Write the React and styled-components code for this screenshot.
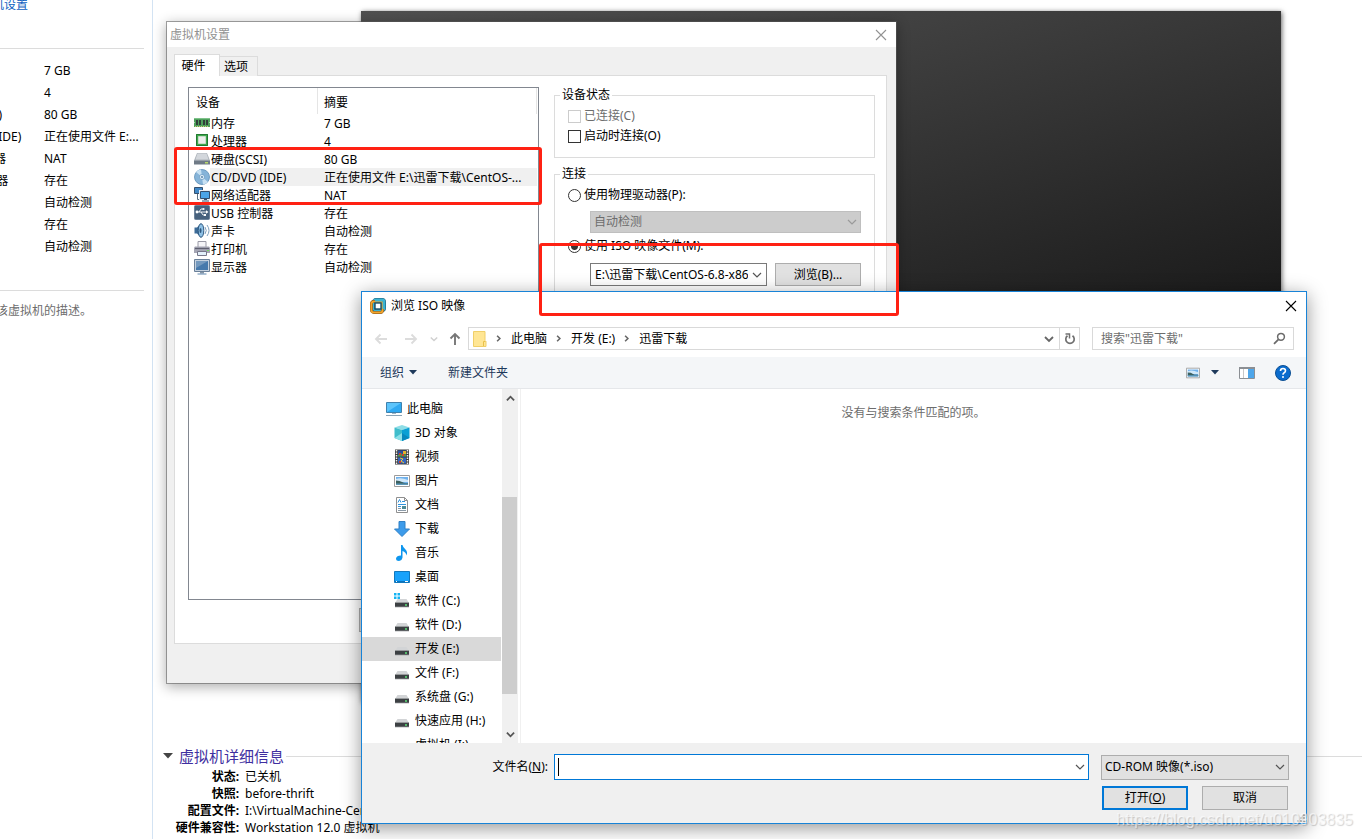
import { styled, createGlobalStyle } from "styled-components";

const GlobalStyle = createGlobalStyle`
  * {
    box-sizing: border-box;
  }

  body {
    margin: 0;
    overflow: hidden;
    background-color: #fff;
    color: #000;
    font-family: "Noto Sans", "Noto Sans CJK SC", sans-serif;
    font-size: 12px;
    line-height: 16px;
  }

  button, input, select {
    margin: 0;
    padding: 0;
    font: inherit;
    color: inherit;
  }

  svg {
    display: block;
    flex: none;
  }
`;

/* ---------- workstation page ---------- */

const Desktop = styled.div`
  position: relative;
  display: flex;
  height: 100vh;
  min-height: 839px;
  overflow: hidden;
`;

const Sidebar = styled.aside`
  width: 153px;
  flex: none;
  padding-right: 8px;
  overflow: hidden;
  border-right: 1px solid #d3e3f3;
  white-space: nowrap;
`;

const SidebarHead = styled.div`
  display: flex;
  justify-content: flex-end;
  width: 28px;
  height: 48px;

  a {
    height: 16px;
    margin-top: -3px;
    color: #0c5fbf;
    text-decoration: none;
  }
`;

const SpecList = styled.dl`
  display: grid;
  grid-template-columns: 98px 1fr;
  grid-auto-rows: 22px;
  align-items: center;
  margin: 0 0 0 -54px;
  padding: 11px 0 32px;

  dt, dd {
    margin: 0;
  }
`;

const Rule = styled.hr`
  flex: 1;
  height: 1px;
  margin: 0;
  border: 0;
  background-color: #dcdcdc;
`;

const Describe = styled.p`
  display: flex;
  justify-content: flex-end;
  width: 92px;
  margin: 12px 0 0;
  color: #6d6d6d;
`;

const Main = styled.main`
  flex: 1;
  display: flex;
  flex-direction: column;
  min-width: 0;
`;

const Screen = styled.div`
  height: 691px;
  margin: 11px 81px 0 208px;
  background: linear-gradient(163deg, #505050 0%, #404040 19%, #1b1b1b 58%, #111 100%);
  box-shadow: 1px 1px 5px rgba(0, 0, 0, 0.6);
`;

const Details = styled.section`
  margin-top: 44px;
  padding-left: 10px;
`;

const DetailsHead = styled.div`
  display: flex;
  align-items: center;
  height: 20px;
  gap: 2px;

  h2 {
    margin: 0 0 0 4px;
    color: #3f2fa0;
    font-size: 15px;
    font-weight: 400;
    line-height: 20px;
  }
`;

const DetailsList = styled.dl`
  display: grid;
  grid-template-columns: 76px 1fr;
  grid-auto-rows: 17px;
  column-gap: 6px;
  margin: 2px 0 0;
  line-height: 17px;

  dt {
    text-align: right;
    font-weight: 700;
    white-space: nowrap;
  }
  dd {
    margin: 0;
  }
`;

/* ---------- shared controls ---------- */

const WinButton = styled.button`
  width: ${({ $width }) => $width || 86}px;
  height: ${({ $height }) => $height || 24}px;
  border: ${({ $primary }) => ($primary ? "2px solid #0078d7" : "1px solid #adadad")};
  background-color: #e1e1e1;
`;

const PlainButton = styled.button`
  display: flex;
  align-items: center;
  justify-content: center;
  gap: ${({ $gap }) => $gap || 5}px;
  width: ${({ $width }) => ($width ? `${$width}px` : "auto")};
  height: ${({ $height }) => ($height ? `${$height}px` : "auto")};
  border: 0;
  background: none;
`;

const Combo = styled.div`
  display: flex;
  align-items: center;
  width: ${({ $width }) => ($width ? `${$width}px` : "auto")};
  flex: ${({ $grow }) => ($grow ? 1 : "none")};
  height: ${({ $height }) => $height}px;
  padding: 0 ${({ $end }) => $end || 0}px 0 ${({ $indent }) => $indent || 4}px;
  border: 1px solid ${({ $border }) => $border || "#7a7a7a"};
  background-color: #fff;

  input {
    flex: 1;
    min-width: 0;
    border: 0;
    outline: 0;
    background: none;
  }
`;

const Caret = styled.span`
  width: 1px;
  height: 18px;
  background-color: #000;
`;

const SelectWrap = styled.div`
  display: grid;
  align-items: center;
  width: ${({ $width }) => $width}px;

  select, svg {
    grid-area: 1 / 1;
  }
  select {
    appearance: none;
    width: 100%;
    height: ${({ $height }) => $height}px;
    padding: 0 20px 0 3px;
    border: 1px solid ${({ $disabled }) => ($disabled ? "#bfbfbf" : "#adadad")};
    border-radius: 0;
    background-color: ${({ $disabled }) => ($disabled ? "#ccc" : "#e1e1e1")};
    color: ${({ $disabled }) => ($disabled ? "#6d6d6d" : "#000")};
    opacity: 1;
  }
  svg {
    justify-self: end;
    margin-right: 4px;
    pointer-events: none;
  }
`;

/* ---------- settings window ---------- */

const SettingsWindow = styled.section`
  position: absolute;
  top: 21px;
  left: 166px;
  width: 731px;
  border: 1px solid rgba(90, 90, 90, 0.55);
  background-color: #f0f0f0;
  background-clip: padding-box;
  box-shadow: 0 3px 12px rgba(0, 0, 0, 0.32);
`;

const SettingsTitle = styled.header`
  display: flex;
  align-items: center;
  justify-content: space-between;
  height: 25px;
  padding: 0 9px 0 3px;
  background-color: #fff;
  color: #929292;
`;

const SettingsBody = styled.div`
  padding: 7px 9px 39px 7px;
`;

const Tabs = styled.div`
  display: flex;
  align-items: flex-end;
  height: 22px;
`;

const Tab = styled.button`
  position: relative;
  z-index: ${({ $active }) => ($active ? 1 : 0)};
  width: ${({ $active }) => ($active ? 46 : 38)}px;
  height: ${({ $active }) => ($active ? 22 : 20)}px;
  padding-right: ${({ $active }) => ($active ? 7 : 5)}px;
  border: 1px solid #dcdcdc;
  border-bottom: 0;
  border-left-width: ${({ $active }) => ($active ? 1 : 0)}px;
  background-color: ${({ $active }) => ($active ? "#fff" : "#f0f0f0")};
`;

const TabPanel = styled.div`
  display: flex;
  gap: 15px;
  margin-top: -1px;
  padding: 11px 11px 11px 13px;
  border: 1px solid #dcdcdc;
  background-color: #fff;
`;

const DeviceColumn = styled.div`
  width: 351px;
`;

const DeviceFrame = styled.div`
  height: 513px;
  border: 1px solid #828790;
`;

const DeviceTable = styled.table`
  width: 348px;
  table-layout: fixed;
  border-collapse: separate;
  border-spacing: 0;

  th {
    height: 26px;
    padding: 3px 0 0 7px;
    border-right: 1px solid #e5e5e5;
    font-weight: 400;
    text-align: left;
  }
  th + th {
    padding-left: 6px;
  }
  th:first-child {
    width: 129px;
  }
  td {
    height: 18px;
    padding: 0;
    white-space: nowrap;
  }
`;

const DeviceName = styled.div`
  display: flex;
  align-items: center;
  height: 18px;
  padding-left: 5px;

  span {
    flex: 1;
    height: 18px;
    padding-left: 1px;
    line-height: 19px;
    background-color: ${({ $selected }) => ($selected ? "#f0f0f0" : "transparent")};
  }
`;

const DeviceSummary = styled.div`
  height: 18px;
  padding-left: 6px;
  line-height: 19px;
  overflow: hidden;
  text-overflow: ellipsis;
  background-color: ${({ $selected }) => ($selected ? "#f0f0f0" : "transparent")};
`;

const DeviceActions = styled.div`
  display: flex;
  justify-content: flex-end;
  gap: 8px;
  margin-top: 8px;
`;

const OptionColumn = styled.div`
  flex: 1;
  display: flex;
  flex-direction: column;
  gap: 8px;
`;

const Group = styled.fieldset`
  min-width: 0;
  margin: 0;
  padding: 3px 13px 11px;
  border: 1px solid #dcdcdc;

  legend {
    margin-left: -8px;
    padding: 0 2px;
  }
`;

const OptionLabel = styled.label`
  display: flex;
  align-items: center;
  gap: 3px;
  height: 20px;
  color: ${({ $disabled }) => ($disabled ? "#6d6d6d" : "#000")};

  input {
    appearance: none;
    width: 13px;
    height: 13px;
    border: 1px solid ${({ $disabled }) => ($disabled ? "#ccc" : "#333")};
    background-color: #fff;
  }
  input[type="radio"] {
    border-radius: 50%;
  }
  input[type="radio"]:checked {
    background: radial-gradient(circle, #333 3px, #fff 4px);
  }
`;

const Indented = styled.div`
  display: flex;
  gap: 8px;
  padding: ${({ $top }) => $top}px 0 3px 22px;
`;

/* ---------- file dialog ---------- */

const Dialog = styled.section`
  position: absolute;
  top: 291px;
  left: 361px;
  width: 946px;
  border: 1px solid #1883d7;
  background-color: #fff;
  box-shadow: 0 4px 18px rgba(0, 0, 0, 0.42);
`;

const DialogTitle = styled.header`
  display: flex;
  align-items: center;
  gap: 5px;
  height: 28px;
  padding: 0 9px 0 8px;

  h1 {
    flex: 1;
    margin: 0;
    font-size: 12px;
    font-weight: 400;
    line-height: 18px;
  }
`;

const NavBar = styled.nav`
  display: flex;
  align-items: center;
  height: 37px;
  padding: 0 12px 0 4px;
`;

const AddressBar = styled.div`
  flex: 1;
  display: flex;
  align-items: center;
  height: 23px;
  padding-left: 4px;
  border: 1px solid #d9d9d9;
`;

const Crumb = styled.a`
  display: flex;
  align-items: center;
  color: #000;
  text-decoration: none;

  svg {
    margin: 0 9px 0 8px;
  }
`;

const AddressTools = styled.div`
  display: flex;
  height: 21px;
  margin-left: auto;

  button + button {
    border-left: 1px solid #d9d9d9;
  }
`;

const SearchBox = styled.label`
  display: flex;
  align-items: center;
  width: 202px;
  height: 23px;
  margin-left: 12px;
  padding: 0 7px 0 8px;
  border: 1px solid #d9d9d9;

  input {
    flex: 1;
    min-width: 0;
    border: 0;
    outline: 0;
  }
  input::placeholder {
    color: #6d6d6d;
    opacity: 1;
  }
`;

const Toolbar = styled.div`
  display: flex;
  align-items: center;
  height: 32px;
  padding: 0 15px 0 18px;
  border-bottom: 1px solid #e5e7ea;
  background-color: #f4f6f8;
  color: #1e395b;
`;

const ToolGroup = styled.div`
  display: flex;
  align-items: center;
  gap: ${({ $gap }) => $gap}px;
  margin-left: ${({ $end }) => ($end ? "auto" : 0)};
`;

const Browser = styled.div`
  display: flex;
  height: 354px;
`;

const Tree = styled.ul`
  width: 140px;
  margin: 0;
  padding: 8px 1px 0 0;
  overflow: hidden;
  list-style: none;
`;

const TreeItem = styled.li`
  display: flex;
  align-items: center;
  gap: 5px;
  height: 24px;
  padding-left: ${({ $root }) => ($root ? 24 : 32)}px;
  background-color: ${({ $selected }) => ($selected ? "#d9d9d9" : "transparent")};
  white-space: nowrap;
`;

const ScrollTrack = styled.div`
  display: flex;
  flex-direction: column;
  justify-content: space-between;
  align-items: center;
  width: 16px;
  background-color: #f0f0f0;
`;

const ScrollThumb = styled.div`
  width: 15px;
  height: 197px;
  margin: 58px 1px 0 0;
  background-color: #cdcdcd;
`;

const FileArea = styled.div`
  flex: 1;
  margin-left: 2px;
  padding-top: 16px;
  border-left: 1px solid #f0f0f0;
  color: #6d6d6d;
  text-align: center;
`;

const DialogFooter = styled.footer`
  padding: 11px 17px 13px 0;
  background-color: #f0f0f0;
`;

const NameRow = styled.div`
  display: flex;
  align-items: center;

  label {
    width: 192px;
    padding-right: 6px;
    text-align: right;
  }
  > :last-child {
    margin-left: 12px;
  }
`;

const ButtonRow = styled.div`
  display: flex;
  justify-content: flex-end;
  gap: 14px;
  margin-top: 6px;
  padding-right: 1px;
`;

/* ---------- marks on top ---------- */

const Highlight = styled.div`
  position: absolute;
  top: ${({ $top }) => $top}px;
  left: ${({ $left }) => $left}px;
  width: ${({ $width }) => $width}px;
  height: ${({ $height }) => $height}px;
  border: 3px solid #ff2113;
  border-radius: 3px;
  pointer-events: none;
`;

const Watermark = styled.div`
  position: absolute;
  right: 9px;
  bottom: 9px;
  color: rgba(255, 255, 255, 0.6);
  font-family: "Liberation Sans", sans-serif;
  font-size: 16px;
  line-height: 20px;
  text-shadow: 1px 1px 1px rgba(0, 0, 0, 0.18);
  pointer-events: none;
`;

/* ---------- icons ---------- */

const Chevron = ({ dir = "down", size = 10, color = "#555", weight = 1.2 }) => {
  const turn = { down: 0, left: 90, up: 180, right: 270 }[dir];
  return (
    <svg width={size} height={size} viewBox="0 0 10 10">
      <path
        d="M1 3l4 4 4-4"
        fill="none"
        stroke={color}
        strokeWidth={weight}
        transform={`rotate(${turn} 5 5)`}
      />
    </svg>
  );
};

const Triangle = ({ color = "#1e395b", width = 8, height = 5 }) => (
  <svg width={width} height={height} viewBox="0 0 8 5" preserveAspectRatio="none">
    <path d="M0 0h8L4 4.5z" fill={color} />
  </svg>
);

const Cross = ({ color }) => (
  <svg width="12" height="12" viewBox="0 0 12 12">
    <path d="M1 1l10 10M11 1L1 11" stroke={color} strokeWidth="1.1" />
  </svg>
);

const Arrow = ({ dir, color }) => (
  <svg width="14" height="14" viewBox="0 0 14 14">
    <path
      d="M13 7H2M6.5 2.5L2 7l4.5 4.5"
      fill="none"
      stroke={color}
      strokeWidth="1.9"
      transform={`rotate(${{ left: 0, up: 90, right: 180 }[dir]} 7 7)`}
    />
  </svg>
);

const Icon16 = ({ children }) => (
  <svg width="16" height="16" viewBox="0 0 16 16">
    {children}
  </svg>
);

const MemoryIcon = () => (
  <Icon16>
    <path d="M0 3h16v4l-1 .5 1 .5v4H0V8l1-.5L0 7z" fill="#4ea15c" />
    <path d="M0 3.5h16" stroke="#7fc28a" />
    <path d="M2 5h2v5H2zM5 5h2v5H5zM9 5h2v5H9zM12 5h2v5h-2z" fill="#31403a" />
    <path d="M1 11.5h14" stroke="#d3c878" strokeDasharray="1 1" />
  </Icon16>
);

const CpuIcon = () => (
  <Icon16>
    <path d="M2 1h12v12H2z" fill="#3fa84e" />
    <path d="M2.5 1.5h11v11h-11z" fill="none" stroke="#227a31" />
    <path d="M4.5 3.5h7v7h-7z" fill="#eceeec" stroke="#c9dcc9" />
  </Icon16>
);

const DiskIcon = () => (
  <Icon16>
    <path d="M3 2h10l3 7.5H0z" fill="#aeb4bb" />
    <path d="M3.5 2.5h9l2 6h-13z" fill="#d3d7dc" />
    <path d="M0 9h16v4.500H0z" fill="#6f7a86" />
    <path d="M0 9.500h16" stroke="#979fa8" />
    <path d="M11 11h3v1.500h-3z" fill="#b9d968" />
  </Icon16>
);

const DiscIcon = () => (
  <Icon16>
    <circle cx="8" cy="8" r="7.5" fill="#86b4d9" stroke="#5d8fb8" strokeWidth="0.8" />
    <path d="M8 8L2 3a8 8 0 0 1 5-2.5zM8 8l6 5a8 8 0 0 1-5 2.5z" fill="#c8e1f3" />
    <circle cx="8" cy="8" r="2.6" fill="#dcebf6" stroke="#5d8fb8" strokeWidth="0.6" />
    <circle cx="8" cy="8" r="0.9" fill="#4f7da3" />
  </Icon16>
);

const NetworkIcon = () => (
  <Icon16>
    <path d="M0.5 0.5h8v6h-8z" fill="#3f87c6" stroke="#34506e" />
    <path d="M3.5 7v5.500H7" fill="none" stroke="#5d6f80" />
    <path d="M6.500 4.500h9v7h-9z" fill="#54b0f0" stroke="#e8eef4" strokeWidth="3" />
    <path d="M6.500 4.500h9v7h-9z" fill="#4aa5e8" stroke="#34506e" />
    <path d="M10 12.500h3M8 14h7" stroke="#34506e" />
  </Icon16>
);

const UsbIcon = () => (
  <Icon16>
    <rect width="15" height="14" x="0.5" y="0.5" rx="1" fill="#47617d" stroke="#6c829a" />
    <path d="M2 7h11M5 7l2-3h2M7 7l2 3h2" fill="none" stroke="#fff" strokeWidth="0.9" />
    <circle cx="3" cy="7" r="1.4" fill="#fff" />
    <circle cx="9.500" cy="4" r="1.100" fill="#fff" />
    <path d="M10 9h2v2h-2zM12 5.200l2.500 1.800-2.500 1.800z" fill="#fff" />
  </Icon16>
);

const SoundIcon = () => (
  <Icon16>
    <path d="M0.5 4.500H3l4-4v14l-4-4H0.500z" fill="#3c6b97" />
    <ellipse cx="7" cy="7.500" rx="2.800" ry="6.800" fill="#8ec1e6" stroke="#2f587f" />
    <ellipse cx="6.500" cy="7.500" rx="1" ry="2.500" fill="#2f587f" />
    <path d="M11 4q2.500 3.500 0 7M13 2q4 5.500 0 11" fill="none" stroke="#7fa0bd" />
  </Icon16>
);

const PrinterIcon = () => (
  <Icon16>
    <path d="M4 0.500h8v6H4z" fill="#f5f5f8" stroke="#9a9aa6" />
    <path d="M1 5.500h14l1 1V12H0V6.500z" fill="#a5a6b4" />
    <path d="M1 7.500h14" stroke="#5f6070" strokeWidth="1.200" />
    <path d="M3.500 10.500h9v4h-9z" fill="#e3f0fa" stroke="#77788a" />
    <path d="M13 9h2v1h-2z" fill="#6fd65e" />
  </Icon16>
);

const DisplayIcon = () => (
  <Icon16>
    <path d="M0.500 0.500h15v12H0.500z" fill="#c5d1de" stroke="#6a8099" />
    <path d="M2 2h12v9H2z" fill="#4679ac" />
    <path d="M2 2h12L2 9z" fill="#7499be" />
    <path d="M6 13h4v1.500H6z" fill="#8595a6" />
    <path d="M3.500 15h9" stroke="#5f86ad" />
  </Icon16>
);

const VmwareIcon = () => (
  <Icon16>
    <rect x="3.400" y="1.400" width="11.200" height="11.200" rx="2.500" fill="none" stroke="#1a5b78" strokeWidth="2.800" />
    <rect x="3.400" y="1.400" width="11.200" height="11.200" rx="2.500" fill="none" stroke="#3bb3d1" strokeWidth="1.600" />
    <rect x="1.400" y="3.400" width="11.200" height="11.200" rx="2.500" fill="none" stroke="#7d4a10" strokeWidth="2.800" />
    <rect x="1.400" y="3.400" width="11.200" height="11.200" rx="2.500" fill="none" stroke="#f2a52c" strokeWidth="2" />
    <path d="M5 2.600h8.400V11" fill="none" stroke="#3bb3d1" strokeWidth="1.600" />
    <rect x="5" y="5" width="6" height="6" fill="#fff" stroke="#17526b" strokeWidth="1.400" />
  </Icon16>
);

const FolderIcon = () => (
  <svg width="14" height="16" viewBox="0 0 14 16">
    <path d="M0.500 0.500h11.500v9l1 1v5H0.500z" fill="#ffe694" stroke="#f0cf68" />
    <path d="M10.500 15v-4.500h2" fill="none" stroke="#e8c04a" />
  </svg>
);

const PcIcon = () => (
  <Icon16>
    <path d="M0.500 1.500h15v10H0.500z" fill="#5cc4fb" stroke="#3f81ad" />
    <path d="M1 11L15 2v9z" fill="#2fa9f2" />
    <path d="M6 12h4v1H6z" fill="#9fb6c7" />
    <path d="M0 14.500h16" stroke="#8ba3b5" />
  </Icon16>
);

const CubeIcon = () => (
  <Icon16>
    <path d="M0.500 2.500L8 0l7.500 2.500L8 5z" fill="#8edde6" />
    <path d="M0.500 2.500L8 5v11L0.500 13z" fill="#3fbdcb" />
    <path d="M15.500 2.500L8 5v11l7.500-3z" fill="#0ba0d4" />
    <path d="M0.500 13L8 8v8z" fill="#8be0e8" />
    <path d="M8 8v8l7.500-3z" fill="#0888bd" />
  </Icon16>
);

const VideoIcon = () => (
  <Icon16>
    <path d="M1 0.500h14v15H1z" fill="#3b3b3b" />
    <path d="M2.500 1v15M13.500 1v15" stroke="#eee" strokeWidth="1.500" strokeDasharray="1.500 1" />
    <path d="M4 1.500h8v6H4z" fill="#2c4f9c" />
    <path d="M4 8.500h8v6H4z" fill="#3567c0" />
    <path d="M4 6l3-2 2 2 3-1v2.500H4z" fill="#4f9a45" />
    <path d="M5 4h2v2H5zM8 5h2v2H8z" fill="#d0402e" />
    <path d="M9 2h3v3H9z" fill="#e3b42c" />
    <path d="M6 9l3 1-2 2 3 2" stroke="#f0c63a" fill="none" />
    <path d="M5 12h2v2H5z" fill="#d0402e" />
  </Icon16>
);

const PictureIcon = ({ width = 16 }) => (
  <svg width={width} height={width} viewBox="0 0 16 16">
    <path d="M0.500 2.500h15v11H0.500z" fill="#fff" stroke="#9b9b9b" />
    <path d="M2 4h12v8H2z" fill="#6fb1ec" />
    <path d="M2 6q5-2 12 1v2H2z" fill="#cfe7f9" />
    <path d="M2 7.500q4 0 6 1.500t6 1v1H2z" fill="#3c6160" />
    <path d="M2 10.500h12V12H2z" fill="#5b97b8" />
  </svg>
);

const DocIcon = () => (
  <Icon16>
    <path d="M2.500 0.500h8l3 3v12h-11z" fill="#fff" stroke="#8f8f8f" />
    <path d="M10.500 0.500v3h3" fill="none" stroke="#8f8f8f" />
    <path d="M4 5.500l1.500-3 1.500 3M8 4.500h3M4 7.500h8M4 9.500h3" fill="none" stroke="#2f93dd" />
    <path d="M4 11.500h3M4 13.500h8" stroke="#8a9aa8" />
    <path d="M8 9h4v3H8z" fill="#4d8a96" />
  </Icon16>
);

const DownloadIcon = () => (
  <Icon16>
    <path d="M5 0.500h6v7.500h4.500L8 15.500 0.500 8H5z" fill="#3d9bea" stroke="#2f80c6" />
  </Icon16>
);

const MusicIcon = () => (
  <Icon16>
    <path d="M7 0h1.500q0.500 2.500 3 4.500 2.500 2.500 1 6-0.500-3.500-4-4.500v6.500q-0.500 3-3.500 3.500-3 0-3-2.500 0.500-3 5-3z" fill="#0e96ee" />
  </Icon16>
);

const DesktopIcon = () => (
  <Icon16>
    <path d="M0.500 2.500h15v11H0.500z" fill="#18a2fb" stroke="#1278bd" />
    <path d="M1 12.500h14" stroke="#0a73bd" />
    <path d="M2 12.500h1M11 12.500h3" stroke="#fff" />
  </Icon16>
);

const DriveIcon = ({ system }) => (
  <Icon16>
    {system && <path d="M0 0h2.500v2.500H0zM3.500 0H6v2.500H3.500zM0 3.500h2.500V6H0zM3.500 3.500H6V6H3.500z" fill="#12b3f3" />}
    <path d="M3.500 6h9l2.500 4H1z" fill="#d2d4d6" />
    <path d="M1 9.500h14v4.500H1z" fill="#3c4043" />
    <path d="M1 9.500h14M1 14h14" stroke="#9fa2a5" strokeWidth="0.700" />
    <circle cx="12" cy="12" r="0.900" fill="#5ff07c" />
  </Icon16>
);

const RefreshIcon = () => (
  <svg width="12" height="12" viewBox="0 0 12 12">
    <path d="M8.500 2.800a4.200 4.200 0 1 1-5 0" fill="none" stroke="#707070" strokeWidth="1.700" />
    <path d="M1.500 1h4v4.500" fill="none" stroke="#707070" strokeWidth="1.500" />
  </svg>
);

const SearchIcon = () => (
  <svg width="13" height="13" viewBox="0 0 13 13">
    <circle cx="8" cy="4.800" r="3.400" fill="none" stroke="#6b6b6b" strokeWidth="1.500" />
    <path d="M5.500 7.300L1 11.800" stroke="#6b6b6b" strokeWidth="1.800" />
  </svg>
);

const PaneIcon = () => (
  <Icon16>
    <path d="M0.500 2.500h15v11H0.500z" fill="#fff" stroke="#8b8f94" />
    <path d="M0 3h16" stroke="#8b8f94" strokeWidth="2" />
    <path d="M4.500 4v9" stroke="#c8c8c8" />
    <path d="M9 4h6v9H9z" fill="#4ea6ea" />
  </Icon16>
);

const HelpIcon = () => (
  <Icon16>
    <circle cx="8" cy="8" r="7.500" fill="#0a6cce" stroke="#0c4f93" />
    <path d="M5.500 6q0-2.500 2.500-2.500T10.500 5.800q0 1.200-1.300 1.900T8 9.700" fill="none" stroke="#fff" strokeWidth="1.600" />
    <circle cx="8" cy="12" r="1" fill="#fff" />
  </Icon16>
);

const GripIcon = () => (
  <svg width="9" height="9" viewBox="0 0 9 9">
    <path d="M7 1h2v2H7zM4 4h2v2H4zM7 4h2v2H7zM1 7h2v2H1zM4 7h2v2H4zM7 7h2v2H7z" fill="#b5b5b5" />
  </svg>
);

const Grip = styled.span`
  position: absolute;
  right: 1px;
  bottom: 1px;
`;

/* ---------- data ---------- */

const specs = [
  ["内存", "7 GB"],
  ["处理器", "4"],
  ["硬盘(SCSI)", "80 GB"],
  ["CD/DVD (IDE)", "正在使用文件 E:..."],
  ["网络适配器", "NAT"],
  ["USB 控制器", "存在"],
  ["声卡", "自动检测"],
  ["打印机", "存在"],
  ["显示器", "自动检测"],
];

const details = [
  ["状态:", "已关机"],
  ["快照:", "before-thrift"],
  ["配置文件:", "I:\\VirtualMachine-CentOS"],
  ["硬件兼容性:", "Workstation 12.0 虚拟机"],
];

const devices = [
  { name: "内存", summary: "7 GB", Icon: MemoryIcon },
  { name: "处理器", summary: "4", Icon: CpuIcon },
  { name: "硬盘(SCSI)", summary: "80 GB", Icon: DiskIcon },
  { name: "CD/DVD (IDE)", summary: "正在使用文件 E:\\迅雷下载\\CentOS-...", Icon: DiscIcon, selected: true },
  { name: "网络适配器", summary: "NAT", Icon: NetworkIcon },
  { name: "USB 控制器", summary: "存在", Icon: UsbIcon },
  { name: "声卡", summary: "自动检测", Icon: SoundIcon },
  { name: "打印机", summary: "存在", Icon: PrinterIcon },
  { name: "显示器", summary: "自动检测", Icon: DisplayIcon },
];

const places = [
  { name: "此电脑", icon: <PcIcon />, root: true },
  { name: "3D 对象", icon: <CubeIcon /> },
  { name: "视频", icon: <VideoIcon /> },
  { name: "图片", icon: <PictureIcon /> },
  { name: "文档", icon: <DocIcon /> },
  { name: "下载", icon: <DownloadIcon /> },
  { name: "音乐", icon: <MusicIcon /> },
  { name: "桌面", icon: <DesktopIcon /> },
  { name: "软件 (C:)", icon: <DriveIcon system /> },
  { name: "软件 (D:)", icon: <DriveIcon /> },
  { name: "开发 (E:)", icon: <DriveIcon />, selected: true },
  { name: "文件 (F:)", icon: <DriveIcon /> },
  { name: "系统盘 (G:)", icon: <DriveIcon /> },
  { name: "快速应用 (H:)", icon: <DriveIcon /> },
  { name: "虚拟机 (I:)", icon: <DriveIcon /> },
];

const crumbs = ["此电脑", "开发 (E:)", "迅雷下载"];

/* ---------- parts ---------- */

function VmPage() {
  return (
    <>
      <Sidebar>
        <SidebarHead>
          <a href="#settings">编辑虚拟机设置</a>
        </SidebarHead>
        <Rule />
        <SpecList>
          {specs.map(([name, value]) => [
            <dt key={name}>{name}</dt>,
            <dd key={name + "-value"}>{value}</dd>,
          ])}
        </SpecList>
        <Rule />
        <Describe>在此处键入对该虚拟机的描述。</Describe>
      </Sidebar>
      <Main>
        <Screen />
        <Details>
          <DetailsHead>
            <Triangle color="#444" width={10} height={6} />
            <h2>虚拟机详细信息</h2>
            <Rule />
          </DetailsHead>
          <DetailsList>
            {details.map(([name, value]) => [
              <dt key={name}>{name}</dt>,
              <dd key={name + "-value"}>{value}</dd>,
            ])}
          </DetailsList>
        </Details>
      </Main>
    </>
  );
}

function VmSettings() {
  return (
    <SettingsWindow aria-label="虚拟机设置">
      <SettingsTitle>
        <span>虚拟机设置</span>
        <PlainButton type="button" aria-label="关闭">
          <Cross color="#929292" />
        </PlainButton>
      </SettingsTitle>
      <SettingsBody>
        <Tabs>
          <Tab type="button" $active>硬件</Tab>
          <Tab type="button">选项</Tab>
        </Tabs>
        <TabPanel>
          <DeviceColumn>
            <DeviceFrame>
              <DeviceTable>
                <thead>
                  <tr>
                    <th>设备</th>
                    <th>摘要</th>
                  </tr>
                </thead>
                <tbody>
                  {devices.map(({ name, summary, Icon, selected }) => (
                    <tr key={name}>
                      <td>
                        <DeviceName $selected={selected}>
                          <Icon />
                          <span>{name}</span>
                        </DeviceName>
                      </td>
                      <td>
                        <DeviceSummary $selected={selected}>{summary}</DeviceSummary>
                      </td>
                    </tr>
                  ))}
                </tbody>
              </DeviceTable>
            </DeviceFrame>
            <DeviceActions>
              <WinButton type="button" aria-label="添加" />
              <WinButton type="button" aria-label="移除" />
            </DeviceActions>
          </DeviceColumn>
          <OptionColumn>
            <Group>
              <legend>设备状态</legend>
              <OptionLabel $disabled>
                <input type="checkbox" disabled />
                已连接(C)
              </OptionLabel>
              <OptionLabel>
                <input type="checkbox" />
                启动时连接(O)
              </OptionLabel>
            </Group>
            <Group>
              <legend>连接</legend>
              <OptionLabel>
                <input type="radio" name="source" />
                使用物理驱动器(P):
              </OptionLabel>
              <Indented $top={6}>
                <SelectWrap $width={271} $height={22} $disabled>
                  <select aria-label="物理驱动器" disabled>
                    <option>自动检测</option>
                  </select>
                  <Chevron color="#9a9a9a" />
                </SelectWrap>
              </Indented>
              <OptionLabel>
                <input type="radio" name="source" defaultChecked />
                使用 ISO 映像文件(M):
              </OptionLabel>
              <Indented $top={7}>
                <Combo $width={177} $height={23}>
                  <input aria-label="ISO 映像文件" defaultValue="E:\迅雷下载\CentOS-6.8-x86_64-bin-DVD1.iso" />
                  <PlainButton type="button" aria-label="展开" $width={18}>
                    <Chevron />
                  </PlainButton>
                </Combo>
                <WinButton type="button" $height={23}>浏览(B)...</WinButton>
              </Indented>
            </Group>
          </OptionColumn>
        </TabPanel>
      </SettingsBody>
    </SettingsWindow>
  );
}

function FileDialog() {
  return (
    <Dialog role="dialog" aria-label="浏览 ISO 映像">
      <DialogTitle>
        <VmwareIcon />
        <h1>浏览 ISO 映像</h1>
        <PlainButton type="button" aria-label="关闭">
          <Cross color="#000" />
        </PlainButton>
      </DialogTitle>

      <NavBar>
        <PlainButton type="button" aria-label="后退" $width={30}>
          <Arrow dir="left" color="#dcdcdc" />
        </PlainButton>
        <PlainButton type="button" aria-label="前进" $width={30}>
          <Arrow dir="right" color="#dcdcdc" />
        </PlainButton>
        <PlainButton type="button" aria-label="最近位置" $width={16}>
          <Chevron size={8} color="#d0d0d0" weight={1.8} />
        </PlainButton>
        <PlainButton type="button" aria-label="上移" $width={26}>
          <Arrow dir="up" color="#777" />
        </PlainButton>
        <AddressBar>
          <FolderIcon />
          {crumbs.map((name) => (
            <Crumb key={name} href="#">
              <Chevron dir="right" size={7} color="#666" weight={2.2} />
              {name}
            </Crumb>
          ))}
          <AddressTools>
            <PlainButton type="button" aria-label="以前的位置" $width={20} $height={21}>
              <Chevron color="#666" weight={1.8} />
            </PlainButton>
            <PlainButton type="button" aria-label="刷新" $width={20} $height={21}>
              <RefreshIcon />
            </PlainButton>
          </AddressTools>
        </AddressBar>
        <SearchBox>
          <input aria-label="搜索" placeholder={'搜索"迅雷下载"'} />
          <SearchIcon />
        </SearchBox>
      </NavBar>

      <Toolbar>
        <ToolGroup $gap={31}>
          <PlainButton type="button">
            组织
            <Triangle />
          </PlainButton>
          <PlainButton type="button">新建文件夹</PlainButton>
        </ToolGroup>
        <ToolGroup $gap={20} $end>
          <PlainButton type="button" aria-label="更改视图" $gap={11}>
            <PictureIcon width={14} />
            <Triangle />
          </PlainButton>
          <PlainButton type="button" aria-label="预览窗格">
            <PaneIcon />
          </PlainButton>
          <PlainButton type="button" aria-label="帮助">
            <HelpIcon />
          </PlainButton>
        </ToolGroup>
      </Toolbar>

      <Browser>
        <Tree>
          {places.map(({ name, icon, root, selected }) => (
            <TreeItem key={name} $root={root} $selected={selected}>
              {icon}
              {name}
            </TreeItem>
          ))}
        </Tree>
        <ScrollTrack>
          <PlainButton type="button" aria-label="向上滚动" $height={18}>
            <Chevron dir="up" size={9} weight={2} />
          </PlainButton>
          <ScrollThumb />
          <PlainButton type="button" aria-label="向下滚动" $height={18}>
            <Chevron size={9} weight={2} />
          </PlainButton>
        </ScrollTrack>
        <FileArea>没有与搜索条件匹配的项。</FileArea>
      </Browser>

      <DialogFooter>
        <NameRow>
          <label htmlFor="filename">
            文件名(<u>N</u>):
          </label>
          <Combo $grow $height={26} $indent={3} $end={3} $border="#0078d7">
            <Caret />
            <input id="filename" />
            <Chevron />
          </Combo>
          <SelectWrap $width={188} $height={25}>
            <select aria-label="文件类型">
              <option>CD-ROM 映像(*.iso)</option>
            </select>
            <Chevron />
          </SelectWrap>
        </NameRow>
        <ButtonRow>
          <WinButton type="button" $primary>
            打开(<u>O</u>)
          </WinButton>
          <WinButton type="button">取消</WinButton>
        </ButtonRow>
      </DialogFooter>
      <Grip>
        <GripIcon />
      </Grip>
    </Dialog>
  );
}

export default function App() {
  return (
    <>
      <GlobalStyle />
      <Desktop>
        <VmPage />
        <VmSettings />
        <FileDialog />
        <Highlight $top={147} $left={174} $width={368} $height={58} />
        <Highlight $top={243} $left={539} $width={360} $height={73} />
        <Watermark>https://blog.csdn.net/u010903835</Watermark>
      </Desktop>
    </>
  );
}
